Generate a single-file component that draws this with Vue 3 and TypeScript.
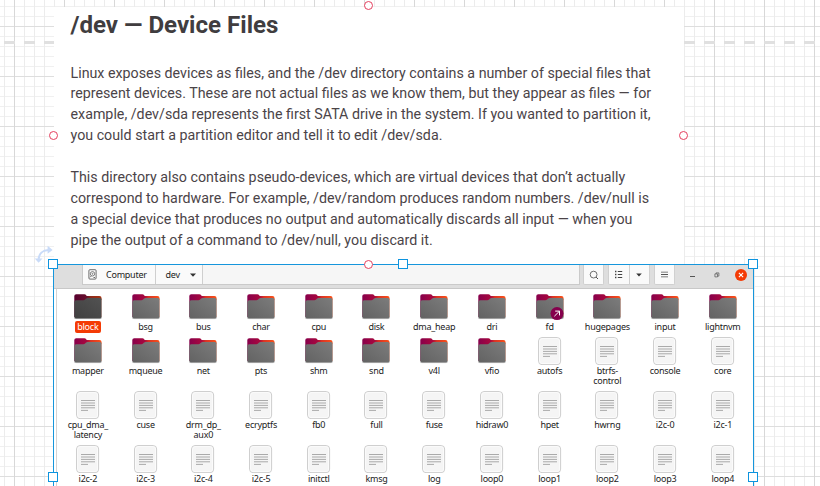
<script setup lang="ts">
interface Entry {
  name: string
  lines: string[]
  kind: 'folder' | 'file'
}

const folders: string[] = [
  'block', 'bsg', 'bus', 'char', 'cpu', 'disk', 'dma_heap', 'dri', 'fd', 'hugepages', 'input', 'lightnvm',
  'mapper', 'mqueue', 'net', 'pts', 'shm', 'snd', 'v4l', 'vfio',
]
const files: string[] = [
  'autofs', 'btrfs-|control', 'console', 'core',
  'cpu_dma_|latency', 'cuse', 'drm_dp_|aux0', 'ecryptfs', 'fb0', 'full', 'fuse', 'hidraw0', 'hpet', 'hwrng', 'i2c-0', 'i2c-1',
  'i2c-2', 'i2c-3', 'i2c-4', 'i2c-5', 'initctl', 'kmsg', 'log', 'loop0', 'loop1', 'loop2', 'loop3', 'loop4',
]

const toEntry = (kind: Entry['kind']) => (raw: string): Entry => ({
  name: raw.replace('|', ''),
  lines: raw.split('|'),
  kind,
})

const entries: Entry[] = [...folders.map(toEntry('folder')), ...files.map(toEntry('file'))]

const paragraphs: string[][] = [
  [
    'Linux exposes devices as files, and the /dev directory contains a number of special files that',
    'represent devices. These are not actual files as we know them, but they appear as files — for',
    'example, /dev/sda represents the first SATA drive in the system. If you wanted to partition it,',
    'you could start a partition editor and tell it to edit /dev/sda.',
  ],
  [
    'This directory also contains pseudo-devices, which are virtual devices that don’t actually',
    'correspond to hardware. For example, /dev/random produces random numbers. /dev/null is',
    'a special device that produces no output and automatically discards all input — when you',
    'pipe the output of a command to /dev/null, you discard it.',
  ],
]
</script>

<template>
  <div class="canvas">
    <div class="page-break"></div>

    <article class="note">
      <h1>/dev — Device Files</h1>
      <p v-for="(p, i) in paragraphs" :key="i">
        <span v-for="line in p" :key="line">{{ line }}</span>
      </p>
    </article>

    <section class="window">
      <header class="bar">
        <div class="path">
          <div class="crumb computer">
            <svg width="9" height="11" viewBox="0 0 9 11" fill="none" stroke="#4a4a4a">
              <rect x="0.9" y="0.7" width="7.2" height="9.4" rx="1" stroke-width=".8" />
              <circle cx="4.5" cy="4.8" r="2.2" stroke-width=".7" />
              <circle cx="4.5" cy="4.8" r=".5" stroke-width=".6" />
              <path d="M2 8.3 3.3 7M5.5 8.5h1.5" stroke-width=".8" />
            </svg>
            <span>Computer</span>
          </div>
          <div class="crumb dev">
            <span>dev</span>
            <svg width="6" height="4" viewBox="0 0 6 4"><path d="M0 .4h6L3 3.7z" fill="#333" /></svg>
          </div>
        </div>
        <div class="btn search">
          <svg width="10" height="10" viewBox="0 0 10 10" fill="none" stroke="#4c4c4c">
            <circle cx="4.6" cy="4.6" r="3.4" stroke-width=".8" />
            <path d="m7.1 7.1 1.9 1.9" stroke-width="1" />
          </svg>
        </div>
        <div class="btn views">
          <div class="half">
            <svg width="9" height="9" viewBox="0 0 9 9" fill="#444">
              <path d="M1 .8h1.4v1.4H1zM1 3.8h1.4v1.4H1zM1 6.8h1.4v1.4H1zM3.8 1.1h4.4v.8H3.8zM3.8 4.1h4.4v.8H3.8zM3.8 7.1h4.4v.8H3.8z" />
            </svg>
          </div>
          <div class="half">
            <svg width="6" height="4" viewBox="0 0 6 4"><path d="M.2.4h5.6L3 3.6z" fill="#333" /></svg>
          </div>
        </div>
        <div class="btn menu">
          <svg width="7" height="7" viewBox="0 0 7 7" fill="#555"><path d="M0 .8h7v.8H0zM0 3.1h7v.8H0zM0 5.4h7v.8H0z" /></svg>
        </div>
        <svg class="min" width="5" height="9" viewBox="0 0 5 9"><path d="M0 6h5v1H0z" fill="#555" /></svg>
        <svg class="restore" width="6" height="6" viewBox="0 0 6 6" fill="none" stroke="#555" stroke-width=".7">
          <path d="M.9 1.9h2.6v3H.9zM2 1.8V.9h2.9v3.2H3.9" />
        </svg>
        <svg class="close" width="12" height="12" viewBox="0 0 12 12">
          <circle cx="6" cy="6" r="6" fill="#f43b05" />
          <path d="m3.9 3.9 4.2 4.2m0-4.2L3.9 8.1" stroke="#fff" stroke-width="1.1" />
        </svg>
      </header>

      <div class="files">
        <div v-for="e in entries" :key="e.name" class="entry" :class="{ selected: e.name === 'block' }">
          <svg v-if="e.kind === 'folder'" class="icon" width="28" height="28" viewBox="0 0 28 28">
            <defs>
              <linearGradient :id="'tab-' + e.name" x1="0" x2="1">
                <stop offset="0" :stop-color="e.name === 'block' ? '#58002f' : '#87004c'" />
                <stop offset=".45" :stop-color="e.name === 'block' ? '#66102c' : '#a8083e'" />
                <stop offset=".6" :stop-color="e.name === 'block' ? '#8d2a1a' : '#d93425'" />
                <stop offset="1" :stop-color="e.name === 'block' ? '#a33312' : '#fa5118'" />
              </linearGradient>
              <linearGradient :id="'body-' + e.name" x1="0" x2="1" y1="1" y2="0">
                <stop offset="0" :stop-color="e.name === 'block' ? '#404040' : '#626262'" />
                <stop offset="1" :stop-color="e.name === 'block' ? '#525252' : '#7c7c7c'" />
              </linearGradient>
            </defs>
            <path d="M.3 24V3Q.3 1.3 2.3 1.3h8.2q1.6 0 2.2 1.7h12.7q2.2 0 2.2 2.2V24z" :fill="`url(#tab-${e.name})`" />
            <path
              d="M.3 9Q.3 7.2 2.2 7.2h7.2q1 0 1.7-.8l.7-.7q.8-.8 1.8-.8H25.8q1.8 0 1.8 1.8V24.2q0 1.6-1.6 1.6H1.9Q.3 25.8.3 24.2z"
              :fill="`url(#body-${e.name})`"
            />
            <path d="M.4 23.9q0 1.9 1.6 1.9H26q1.6 0 1.6-1.9V6.8" fill="none" stroke="#c9c9c9" stroke-opacity=".65" stroke-width=".6" />
            <g v-if="e.name === 'fd'">
              <circle cx="21" cy="20.6" r="6.5" fill="#85004d" />
              <path d="m18.4 23.2 4.9-4.9m-4.1-.2h4.3v4.3" fill="none" stroke="#fff" stroke-width="1" />
            </g>
          </svg>
          <svg v-else class="icon" width="28" height="28" viewBox="0 0 28 28">
            <rect x="2.6" y=".6" width="22" height="27" rx="3.4" fill="#f5f5f5" stroke="#cbcbcb" />
            <rect x="3.6" y="1.6" width="20" height="25" rx="2.4" fill="none" stroke="#fcfcfc" stroke-width=".8" />
            <path d="M7 9.5h14M7 12h14M7 14.4h14M7 16.8h14M7 19.4h7" fill="none" stroke="#a2a2a2" stroke-width=".9" />
          </svg>
          <div class="label"><span v-for="l in e.lines" :key="l">{{ l }}</span></div>
        </div>
      </div>
    </section>

    <svg class="rotate" width="20" height="20" viewBox="0 0 20 20">
      <path d="M4.6 14.5C4.8 9 8.6 5.2 14.6 5" fill="none" stroke="#c9dbf8" stroke-width="2" />
      <path d="M13.6.8 18.6 5l-5 3.8zM.7 13.4h7.8l-3.9 4.3z" fill="#c9dbf8" />
    </svg>

    <i class="port top"></i>
    <i class="port left"></i>
    <i class="port right"></i>
    <i class="port bottom"></i>
    <i class="handle nw"></i>
    <i class="handle n"></i>
    <i class="handle ne"></i>
    <i class="handle w"></i>
    <i class="handle e"></i>
  </div>
</template>

<style>
body {
  margin: 0;
  overflow: hidden;
}
</style>

<style scoped>
.canvas {
  position: relative;
  width: 820px;
  height: 486px;
  overflow: hidden;
  background-color: #fff;
  background-image:
    linear-gradient(90deg, #d8d8d8 1px, transparent 1px),
    linear-gradient(#dedede 1px, transparent 1px),
    linear-gradient(90deg, #ececec 1px, transparent 1px),
    linear-gradient(#f0f0f0 1px, transparent 1px);
  background-size: 50px 50px, 50px 50px, 10px 10px, 10px 10px;
  background-position: 14px 0, 0 26px, 4px 0, 0 6px;
}

.page-break {
  position: absolute;
  left: 0;
  top: 41px;
  width: 820px;
  height: 3px;
  background: repeating-linear-gradient(90deg, transparent 0 4px, #e0e0e0 4px 14.6px, transparent 14.6px 20px);
}

.note {
  position: absolute;
  left: 54px;
  top: 7px;
  width: 630px;
  height: 258px;
  box-sizing: border-box;
  padding: 3px 0 0 16.5px;
  background: #fff;
  color: #4b4448;
  font-family: Roboto, sans-serif;
  white-space: nowrap;
}

.note h1 {
  margin: 0 0 22.5px;
  font-size: 24.1px;
  line-height: 30px;
  font-weight: 700;
  color: #403d3f;
}

.note p {
  margin: 0 0 21px;
  font-size: 14.26px;
  line-height: 20.9px;
}

.note p span {
  display: block;
}

.window {
  position: absolute;
  left: 53px;
  top: 264px;
  width: 701px;
  height: 240px;
  box-sizing: border-box;
  border: 1px solid #1696dc;
  background: #fff;
  color: #222;
  font-family: "Noto Sans", sans-serif;
  font-size: 9px;
  letter-spacing: -0.25px;
}

.bar {
  display: flex;
  align-items: flex-start;
  height: 24px;
  box-sizing: border-box;
  padding-left: 28px;
  border-bottom: 1px solid #c8c8c8;
  background: #dedede;
}

.path,
.btn {
  display: flex;
  height: 20px;
  box-sizing: border-box;
  border: solid #cacaca;
  border-width: 0 1px 1px;
  background: #fafafa;
}

.path {
  width: 498px;
  background: #f6f6f6;
}

.crumb {
  display: flex;
  align-items: center;
  box-sizing: border-box;
  border-right: 1px solid #cfcfcf;
  background: #fafafa;
}

.computer {
  width: 73px;
  padding-left: 5px;
  gap: 9px;
}

.dev {
  width: 47px;
  padding-left: 9.5px;
  gap: 10px;
}

.btn {
  align-items: center;
  justify-content: center;
  border-radius: 0 0 2px 2px;
  border-color: #d0d0d0;
}

.search {
  width: 21px;
  margin-left: 3px;
}

.views {
  width: 42px;
  margin-left: 4px;
  align-items: stretch;
}

.half {
  display: flex;
  flex: 1;
  align-items: center;
  justify-content: center;
}

.half + .half {
  border-left: 1px solid #d0d0d0;
}

.menu {
  width: 21px;
  margin-left: 4px;
}

.min {
  margin: 5px 0 0 15px;
}

.restore {
  margin: 7px 0 0 18.5px;
}

.close {
  margin: 4px 0 0 15px;
}

.files {
  display: grid;
  grid-template-columns: repeat(12, 57.73px);
  grid-template-rows: 44px 54px 54px 54px;
  height: 215px;
  box-sizing: border-box;
  margin-left: 2px;
  padding: 4px 0 0 2px;
  border-left: 1px solid #d4d4d4;
}

.entry {
  display: flex;
  flex-direction: column;
  align-items: center;
  min-width: 0;
}

.icon {
  display: block;
  flex: none;
}

.label {
  display: flex;
  flex-direction: column;
  align-items: center;
  margin-top: 1px;
  line-height: 10px;
  white-space: nowrap;
}

.selected .label {
  margin-top: 0;
  padding: 1px 2.5px;
  border-radius: 2px;
  background: #f43b05;
  color: #fff;
}

.rotate {
  position: absolute;
  left: 34px;
  top: 245px;
}

.port,
.handle {
  position: absolute;
  box-sizing: border-box;
  background: #fff;
}

.port {
  width: 9px;
  height: 9px;
  border: 1px solid #e5405f;
  border-radius: 50%;
}

.handle {
  width: 10px;
  height: 10px;
  border: 1px solid #0d94df;
}

.top { left: 364px; top: 1px; }
.left { left: 49px; top: 131px; }
.right { left: 679px; top: 131px; }
.bottom { left: 364px; top: 260px; }
.nw { left: 48px; top: 259px; }
.n { left: 398px; top: 259px; }
.ne { left: 748px; top: 259px; }
.w { left: 48px; top: 472px; }
.e { left: 748px; top: 472px; }
</style>
